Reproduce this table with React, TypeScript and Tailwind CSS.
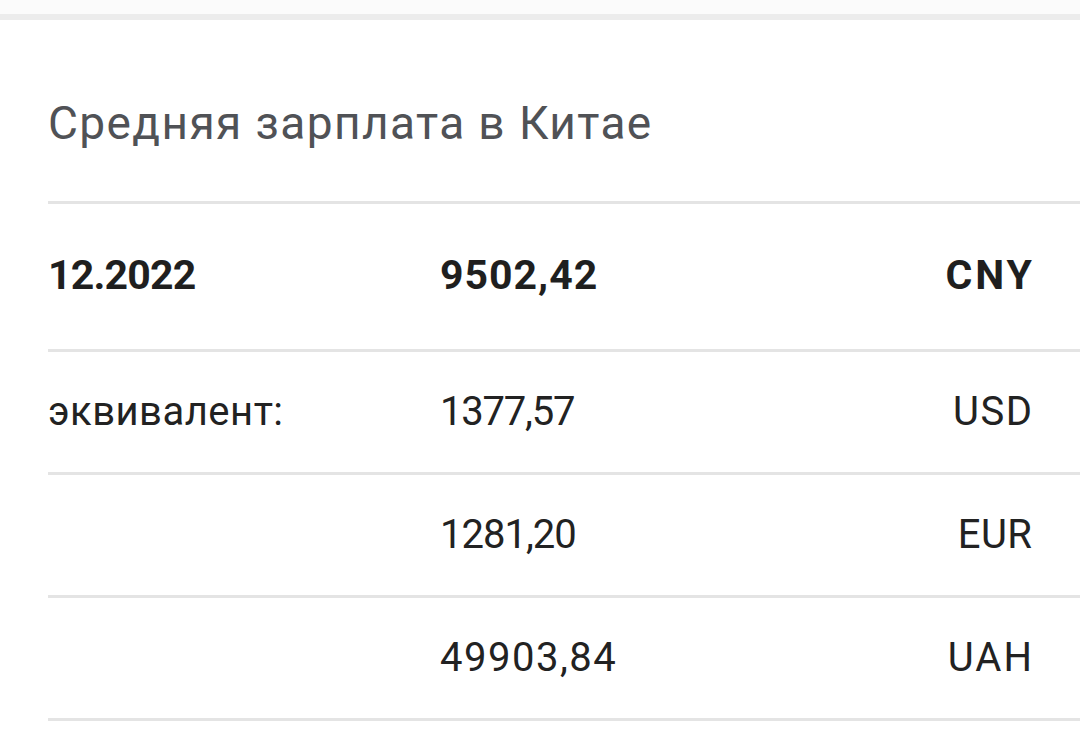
import React from "react";

const rows = [
  {
    label: "эквивалент:",
    value: "1377,57",
    valueTrack: "tracking-[-1.2px]",
    currency: "USD",
    currencyTrack: "tracking-[1.5px] -mr-[1.5px]",
  },
  {
    label: "",
    value: "1281,20",
    valueTrack: "tracking-[-1px]",
    currency: "EUR",
    currencyTrack: "tracking-[0.5px] -mr-[0.5px]",
  },
  {
    label: "",
    value: "49903,84",
    valueTrack: "tracking-[1.5px]",
    currency: "UAH",
    currencyTrack: "tracking-[2px] -mr-[2px]",
  },
];

const App = () => {
  return (
    <div className="w-[1080px] h-[756px] bg-white overflow-hidden font-['Roboto',sans-serif]">
      <div className="h-[14px] bg-[#fbfbfb]" />
      <div className="h-[6px] bg-[#ececec]" />

      <div className="pl-12">
        <div className="h-[181px] flex items-center pt-[24px]">
          <h1 className="text-[46px] tracking-[1.4px] text-[#505256] leading-none">
            Средняя зарплата в Китае
          </h1>
        </div>

        {/* Main row */}
        <div className="border-t-[3px] border-[#e4e4e4] h-[148px] flex items-center pr-12 pb-[2px] text-[41px] font-bold text-[#1f1f1f]">
          <span className="w-[392px] tracking-[-0.8px]">12.2022</span>
          <span className="flex-1 tracking-[1px]">9502,42</span>
          <span className="tracking-[3px] -mr-[3px]">CNY</span>
        </div>

        {rows.map((row, index) => (
          <div
            key={index}
            className="border-t-[3px] border-[#e4e4e4] h-[123px] flex items-center pr-12 text-[40px] text-[#222222]"
          >
            <span className="w-[392px] tracking-[0.5px]">{row.label}</span>
            <span className={"flex-1 " + row.valueTrack}>{row.value}</span>
            <span className={row.currencyTrack}>{row.currency}</span>
          </div>
        ))}
        <div className="border-t-[3px] border-[#e4e4e4]" />
      </div>
    </div>
  );
};

export default App;
